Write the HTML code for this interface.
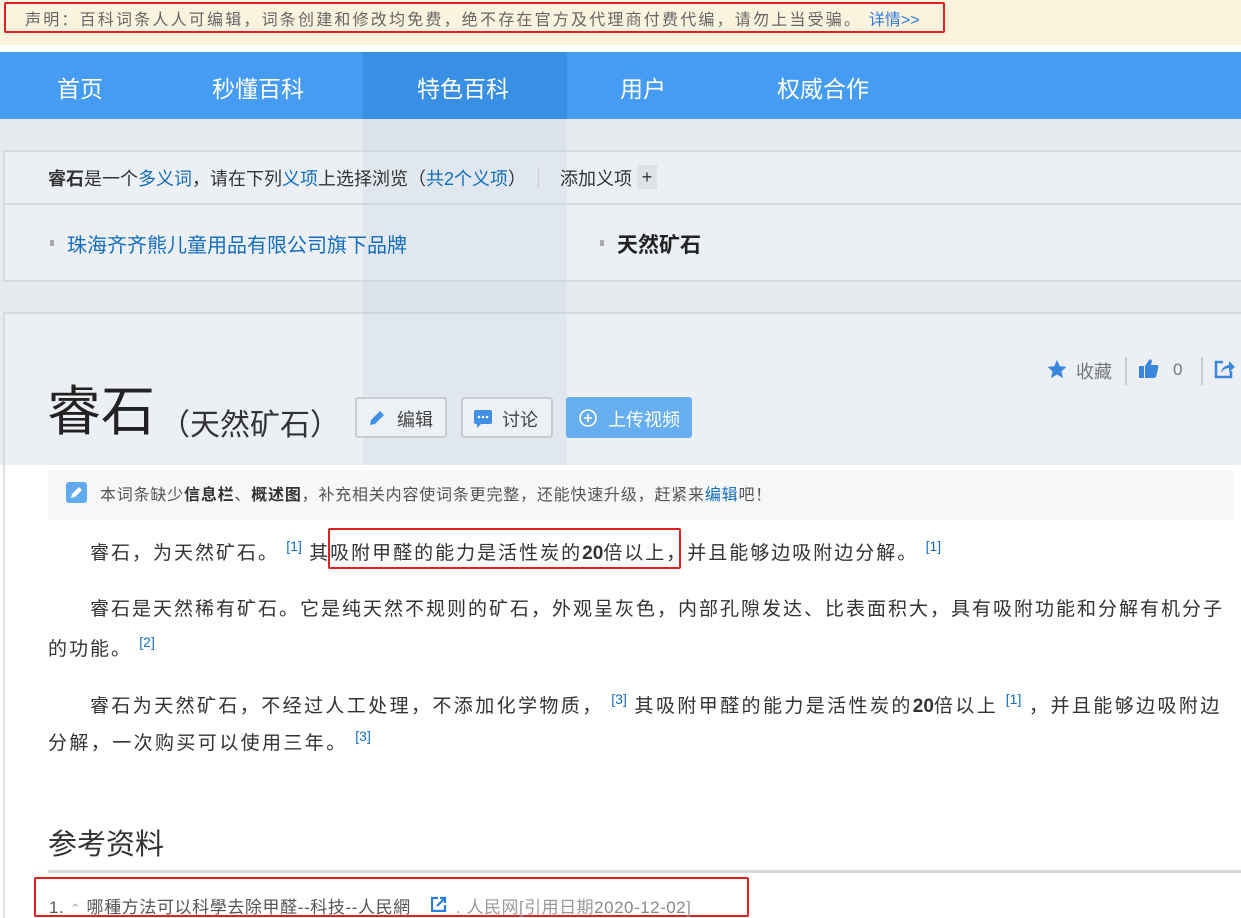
<!DOCTYPE html>
<html><head><meta charset="utf-8"><style>
*{margin:0;padding:0;box-sizing:border-box}
body{width:1241px;height:918px;overflow:hidden;background:#fff;font-family:"Liberation Sans","Noto Sans CJK SC",sans-serif;position:relative;color:#333}
.a{position:absolute;white-space:nowrap}
.blue{color:#136ec2}
.p{font-size:19px;letter-spacing:2px;white-space:normal;text-indent:42px;color:#333;width:1185px}
.p sup{font-size:14px;color:#136ec2;letter-spacing:0;vertical-align:8px;line-height:0}
.p b{letter-spacing:0}
</style></head><body>
<!-- notice -->
<div class="a" style="left:0;top:0;width:1241px;height:45px;background:#fcf3de"></div>
<div class="a" style="left:4px;top:2px;width:941px;height:31px;border:2px solid #e02020;border-radius:2px"></div>
<div class="a" style="left:25px;top:6px;font-size:16px;letter-spacing:2.2px;color:#666">声明：百科词条人人可编辑，词条创建和修改均免费，绝不存在官方及代理商付费代编，请勿上当受骗。 <span style="color:#2d7ce0;letter-spacing:0">详情&gt;&gt;</span></div>
<!-- nav -->
<div class="a" style="left:0;top:52px;width:1241px;height:67px;background:#459cf2"></div>
<div class="a" style="left:363px;top:52px;width:204px;height:67px;background:#388fe3"></div>
<div class="a" style="left:57px;top:70px;font-size:23px;color:#fff">首页</div>
<div class="a" style="left:212px;top:70px;font-size:23px;color:#fff">秒懂百科</div>
<div class="a" style="left:417px;top:70px;font-size:23px;color:#fff">特色百科</div>
<div class="a" style="left:620px;top:70px;font-size:23px;color:#fff">用户</div>
<div class="a" style="left:777px;top:70px;font-size:23px;color:#fff">权威合作</div>
<!-- overlay region -->
<div class="a" style="left:0;top:119px;width:1241px;height:346px;background:#e6ebf0"></div>
<div class="a" style="left:3px;top:150px;width:1238px;height:132px;background:#ecf0f4;border:2px solid #d5dbe1;border-right:none"></div>
<div class="a" style="left:3px;top:203px;width:1238px;height:2px;background:#d5dbe1"></div>
<div class="a" style="left:3px;top:312px;width:1238px;height:153px;background:#ecf0f4;border-top:2px solid #d5dbe1;border-left:2px solid #d5dbe1"></div>
<div class="a" style="left:363px;top:119px;width:204px;height:346px;background:rgba(190,205,220,0.25)"></div>
<div class="a" style="left:48px;top:165px;font-size:18px;color:#333"><b>睿石</b>是一个<span class="blue">多义词</span>，请在下列<span class="blue">义项</span>上选择浏览（<span class="blue">共2个义项</span>）</div>
<div class="a" style="left:538px;top:166px;width:1px;height:22px;background:#d0d0d0"></div>
<div class="a" style="left:560px;top:165px;font-size:18px;color:#333">添加义项</div>
<div class="a" style="left:637px;top:165px;width:20px;height:24px;background:#dde2e7;font-size:18px;text-align:center;line-height:24px">+</div>
<div class="a" style="left:50px;top:240px;width:4px;height:6px;background:#aaa"></div>
<div class="a" style="left:67px;top:229px;font-size:20px;color:#136ec2">珠海齐齐熊儿童用品有限公司旗下品牌</div>
<div class="a" style="left:600px;top:240px;width:4px;height:6px;background:#aaa"></div>
<div class="a" style="left:617px;top:229px;font-size:21px;font-weight:bold;color:#222">天然矿石</div>
<!-- title -->
<div class="a" style="left:47px;top:380px;font-size:54px;color:#222;line-height:64px">睿石</div>
<div class="a" style="left:160px;top:400px;font-size:30px;color:#333">（天然矿石）</div>
<div class="a" style="left:355px;top:397px;width:92px;height:41px;border:2px solid #c9cdd2;border-radius:3px;background:#eef1f4"></div>
<svg class="a" style="left:367px;top:408px" width="20" height="20" viewBox="0 0 20 20"><path d="M3 17 L4 12 L13 3 L17 7 L8 16 Z" fill="#3f8fe6"/></svg>
<div class="a" style="left:397px;top:406px;font-size:18px;color:#444">编辑</div>
<div class="a" style="left:461px;top:397px;width:92px;height:41px;border:2px solid #c9cdd2;border-radius:3px;background:#eef1f4"></div>
<svg class="a" style="left:473px;top:408px" width="20" height="20" viewBox="0 0 20 20"><rect x="1" y="2" width="18" height="14" rx="2" fill="#3f8fe6"/><path d="M4 16 L4 20 L8 16Z" fill="#3f8fe6"/><circle cx="6" cy="9" r="1.3" fill="#fff"/><circle cx="10" cy="9" r="1.3" fill="#fff"/><circle cx="14" cy="9" r="1.3" fill="#fff"/></svg>
<div class="a" style="left:502px;top:406px;font-size:18px;color:#444">讨论</div>
<div class="a" style="left:566px;top:397px;width:126px;height:41px;border-radius:3px;background:#67aef0"></div>
<svg class="a" style="left:578px;top:408px" width="20" height="20" viewBox="0 0 20 20"><circle cx="10" cy="10" r="8" fill="none" stroke="#fff" stroke-width="1.6"/><path d="M10 6v8M6 10h8" stroke="#fff" stroke-width="1.6"/></svg>
<div class="a" style="left:608px;top:406px;font-size:18px;color:#fff">上传视频</div>
<!-- right actions -->
<svg class="a" style="left:1046px;top:358px" width="22" height="22" viewBox="0 0 24 24"><path d="M12 2l3 7 7.5.6-5.7 5 1.8 7.4L12 18l-6.6 4 1.8-7.4-5.7-5L9 9z" fill="#3b87dd"/></svg>
<div class="a" style="left:1076px;top:358px;font-size:18px;color:#777">收藏</div>
<div class="a" style="left:1125px;top:357px;width:2px;height:28px;background:#ccc"></div>
<svg class="a" style="left:1138px;top:357px" width="22" height="22" viewBox="0 0 22 22"><rect x="1" y="9" width="5" height="12" fill="#3b87dd"/><path d="M7 9 L11 3 Q13 1 14 4 L13 8 L19 8 Q21 9 20 12 L18 20 Q17 21 15 21 L7 21Z" fill="#3b87dd"/></svg>
<div class="a" style="left:1173px;top:360px;font-size:17px;color:#777">0</div>
<div class="a" style="left:1201px;top:357px;width:2px;height:28px;background:#ccc"></div>
<svg class="a" style="left:1214px;top:358px" width="22" height="22" viewBox="0 0 22 22"><path d="M9 4 H2 V19 H17 V13" fill="none" stroke="#3b87dd" stroke-width="2.5"/><path d="M7 15 Q8 8 15 7 V3 L21 9 L15 14 V10 Q10 10 7 15Z" fill="#3b87dd"/></svg>
<!-- body -->
<div class="a" style="left:3px;top:465px;width:2px;height:453px;background:#e2e2e2"></div>
<div class="a" style="left:48px;top:470px;width:1185px;height:50px;background:#f6f7f9"></div>
<div class="a" style="left:66px;top:482px;width:21px;height:21px;border-radius:3px;background:#63a9f0"></div>
<svg class="a" style="left:69px;top:485px" width="15" height="15" viewBox="0 0 15 15"><path d="M2 13 L3 9 L10 2 L13 5 L6 12Z" fill="#fff"/></svg>
<div class="a" style="left:100px;top:481px;font-size:16px;letter-spacing:0.8px;color:#555">本词条缺少<b style="color:#333">信息栏</b>、<b style="color:#333">概述图</b>，补充相关内容使词条更完整，还能快速升级，赶紧来<span class="blue">编辑</span>吧！</div>
<div class="a p" style="left:48px;top:535px;line-height:37px">睿石，为天然矿石。 <sup>[1]</sup> 其吸附甲醛的能力是活性炭的<b>20</b>倍以上，并且能够边吸附边分解。 <sup>[1]</sup></div>
<div class="a" style="left:328px;top:528px;width:353px;height:41px;border:2px solid #e02020;border-radius:2px"></div>
<div class="a p" style="left:48px;top:590px;line-height:40px">睿石是天然稀有矿石。它是纯天然不规则的矿石，外观呈灰色，内部孔隙发达、比表面积大，具有吸附功能和分解有机分子的功能。 <sup>[2]</sup></div>
<div class="a p" style="left:48px;top:688px;line-height:37px;letter-spacing:2.4px">睿石为天然矿石，不经过人工处理，不添加化学物质， <sup>[3]</sup> 其吸附甲醛的能力是活性炭的<b>20</b>倍以上 <sup>[1]</sup> ，并且能够边吸附边分解，一次购买可以使用三年。 <sup>[3]</sup></div>
<div class="a" style="left:48px;top:821px;font-size:29px;color:#333">参考资料</div>
<div class="a" style="left:48px;top:870px;width:1193px;height:3px;background:#d8d8d8"></div>
<div class="a" style="left:34px;top:877px;width:715px;height:40px;border:2px solid #e02020;border-radius:2px"></div>
<div class="a" style="left:49px;top:893px;font-size:17px;letter-spacing:0.6px;color:#555">1. <span style="color:#aaa;font-size:13px">⌃</span> 哪種方法可以科學去除甲醛--科技--人民網</div>
<svg class="a" style="left:431px;top:896px" width="16" height="16" viewBox="0 0 16 16"><path d="M7 2H1V15H14V9" fill="none" stroke="#2b7de0" stroke-width="2.2"/><path d="M6 10 L13 3 M9 2H14V7" stroke="#2b7de0" stroke-width="2.2" fill="none"/></svg>
<div class="a" style="left:456px;top:893px;font-size:17px;letter-spacing:0.5px;color:#999">.  人民网[引用日期<span style="color:#888">2020-12-02</span>]</div>
</body></html>
